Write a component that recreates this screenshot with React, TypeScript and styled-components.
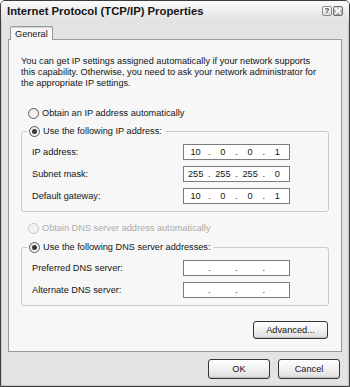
import { Fragment } from "react";
import styled, { createGlobalStyle } from "styled-components";

const GlobalStyle = createGlobalStyle`
  html, body {
    margin: 0;
    padding: 0;
    background: #ffffff;
  }
  body {
    font-family: "Liberation Sans", Arial, sans-serif;
    color: #141414;
  }
`;

type Field = { label: string; value?: string[] };

const ipFields: Field[] = [
  { label: "IP address:", value: ["10", "0", "0", "1"] },
  { label: "Subnet mask:", value: ["255", "255", "255", "0"] },
  { label: "Default gateway:", value: ["10", "0", "0", "1"] },
];

const dnsFields: Field[] = [
  { label: "Preferred DNS server:" },
  { label: "Alternate DNS server:" },
];

const IpBox = ({ value }: { value?: string[] }) => {
  const parts = value ?? ["", "", "", ""];
  return (
    <IpInput>
      {parts.map((p, i) => (
        <Fragment key={i}>
          <Octet>{p}</Octet>
          {i < 3 && <Dot>.</Dot>}
        </Fragment>
      ))}
    </IpInput>
  );
};

const FieldRows = ({ fields }: { fields: Field[] }) => (
  <Rows>
    {fields.map((f) => (
      <Fragment key={f.label}>
        <Label>{f.label}</Label>
        <IpBox value={f.value} />
      </Fragment>
    ))}
  </Rows>
);

const App = () => {
  return (
    <>
      <GlobalStyle />
      <Window>
        <TitleBar>
          <Title>Internet Protocol (TCP/IP) Properties</Title>
          <CaptionButtons>
            <HelpButton>?</HelpButton>
            <CloseButton>
              <svg width="8" height="8" viewBox="0 0 8 8">
                <path
                  d="M1.5 1.5 L6.5 6.5 M6.5 1.5 L1.5 6.5"
                  stroke="#ffffff"
                  strokeWidth="1.6"
                  strokeLinecap="square"
                />
              </svg>
            </CloseButton>
          </CaptionButtons>
        </TitleBar>

        <Body>
          <TabRow>
            <Tab>General</Tab>
          </TabRow>

          <Panel>
            <Intro>
              You can get IP settings assigned automatically if your network supports
              <br />
              this capability. Otherwise, you need to ask your network administrator for
              <br />
              the appropriate IP settings.
            </Intro>

            <RadioRow $top={17}>
              <Radio />
              <span>Obtain an IP address automatically</span>
            </RadioRow>

            <GroupBox $top={4}>
              <Legend>
                <Radio $checked />
                <span>Use the following IP address:</span>
              </Legend>
              <FieldRows fields={ipFields} />
            </GroupBox>

            <RadioRow $top={9} $disabled>
              <Radio $disabled />
              <span>Obtain DNS server address automatically</span>
            </RadioRow>

            <GroupBox $top={5}>
              <Legend>
                <Radio $checked />
                <span>Use the following DNS server addresses:</span>
              </Legend>
              <FieldRows fields={dnsFields} />
            </GroupBox>

            <AdvancedButton>Advanced...</AdvancedButton>
          </Panel>

          <Footer>
            <DialogButton>OK</DialogButton>
            <DialogButton>Cancel</DialogButton>
          </Footer>
        </Body>
      </Window>
    </>
  );
};

export default App;

const Window = styled.div`
  width: 350px;
  height: 387px;
  box-sizing: border-box;

  display: flex;
  flex-direction: column;

  border: 1px solid #3c3c3c;
  border-radius: 5px 5px 0 0;
  background: #e3e3e3;
  box-shadow: inset 0 0 0 1px #c9c9c9;
  overflow: hidden;
`;

const TitleBar = styled.div`
  height: 19px;
  flex-shrink: 0;

  display: flex;
  align-items: center;
  justify-content: space-between;
  padding: 0 6px;

  background: linear-gradient(#fbfbfb, #ededed 55%, #e2e2e2);
`;

const Title = styled.div`
  font-size: 11.3px;
  font-weight: bold;
  color: #151515;
  padding-top: 1px;
`;

const CaptionButtons = styled.div`
  display: flex;
  gap: 1px;
  margin-top: 1px;
`;

const CaptionButton = styled.div`
  width: 10px;
  height: 10px;
  box-sizing: border-box;
  border-radius: 2px;

  display: flex;
  align-items: center;
  justify-content: center;
`;

const HelpButton = styled(CaptionButton)`
  border: 1px solid #8c8c8c;
  background: linear-gradient(#ffffff, #d9d9d9);
  font-size: 8px;
  font-weight: bold;
  color: #3a3a3a;
  line-height: 1;
`;

const CloseButton = styled(CaptionButton)`
  border: 1px solid #6e6e6e;
  background: linear-gradient(#cfcfcf, #a2a2a2);
`;

const Body = styled.div`
  flex: 1;
  display: flex;
  flex-direction: column;
  padding: 6px 7px 0 7px;
`;

const TabRow = styled.div`
  display: flex;
  padding-left: 2px;
`;

const Tab = styled.div`
  position: relative;
  z-index: 1;

  width: 43px;
  height: 14px;
  box-sizing: border-box;
  margin-bottom: -1px;
  padding: 2px 0 0 4px;

  border: 1px solid #999999;
  border-bottom: 0;
  border-radius: 2px 2px 0 0;
  background: #f7f7f7;
  box-shadow: inset 0 1px 0 #d6d6d6;

  font-size: 9.2px;
  line-height: 11px;
`;

const Panel = styled.div`
  display: flex;
  flex-direction: column;
  padding: 16px 12px 12px 12px;

  border: 1px solid #9a9a9a;
  background: #f7f7f7;
`;

const Intro = styled.p`
  margin: 0;
  font-size: 9.2px;
  line-height: 11px;
  white-space: nowrap;
`;

const RadioRow = styled.div<{ $top: number; $disabled?: boolean }>`
  margin-top: ${(p) => p.$top}px;
  height: 14px;
  padding-left: 7px;

  display: flex;
  align-items: center;
  gap: 3px;

  font-size: 9.2px;
  color: ${(p) => (p.$disabled ? "#ababab" : "#141414")};
`;

const Radio = styled.span<{ $checked?: boolean; $disabled?: boolean }>`
  position: relative;
  width: 11px;
  height: 11px;
  box-sizing: border-box;
  flex-shrink: 0;

  border: 1px solid ${(p) => (p.$disabled ? "#c4c4c4" : "#5a5a5a")};
  border-radius: 50%;
  background: ${(p) =>
    p.$disabled ? "#f4f4f4" : "radial-gradient(circle at 60% 65%, #ffffff, #dedede)"};

  &::after {
    content: "";
    display: ${(p) => (p.$checked ? "block" : "none")};
    position: absolute;
    left: 2px;
    top: 2px;
    width: 5px;
    height: 5px;
    border-radius: 50%;
    background: #383838;
  }
`;

const GroupBox = styled.fieldset<{ $top: number }>`
  margin: ${(p) => p.$top}px 0 0 0;
  padding: 6px 10px 7px 10px;
  min-width: 0;

  border: 1px solid #cacaca;
  border-radius: 3px;
`;

const Legend = styled.legend`
  height: 14px;
  margin-left: -5px;
  padding: 0 3px 0 2px;

  display: flex;
  align-items: center;
  gap: 3px;

  font-size: 9.2px;
`;

const Rows = styled.div`
  display: grid;
  grid-template-columns: 151px 107px;
  grid-auto-rows: 16px;
  row-gap: 6px;
  align-items: center;
`;

const Label = styled.div`
  font-size: 9.2px;
`;

const IpInput = styled.div`
  height: 16px;
  box-sizing: border-box;

  display: grid;
  grid-template-columns: 1fr 4px 1fr 4px 1fr 4px 1fr;
  align-items: center;

  border: 1px solid #7c7c7c;
  background: #ffffff;
  font-size: 9.2px;
`;

const Octet = styled.span`
  text-align: center;
`;

const Dot = styled.span`
  text-align: center;
`;

const ButtonBase = styled.button`
  box-sizing: border-box;
  padding: 0;

  border: 1px solid #343434;
  border-radius: 3px;
  background: linear-gradient(#ffffff, #f2f2f2 45%, #e3e3e3 85%, #cfcfcf);
  box-shadow: inset 0 -1px 0 #c2c2c2;

  font-family: "Liberation Sans", Arial, sans-serif;
  font-size: 9.2px;
  color: #141414;
`;

const AdvancedButton = styled(ButtonBase)`
  align-self: flex-end;
  width: 75px;
  height: 18px;
  margin-top: 15px;
  margin-right: 1px;
`;

const Footer = styled.div`
  display: flex;
  justify-content: flex-end;
  gap: 8px;
  padding: 7px 2px 0 0;
`;

const DialogButton = styled(ButtonBase)`
  width: 62px;
  height: 20px;
`;
